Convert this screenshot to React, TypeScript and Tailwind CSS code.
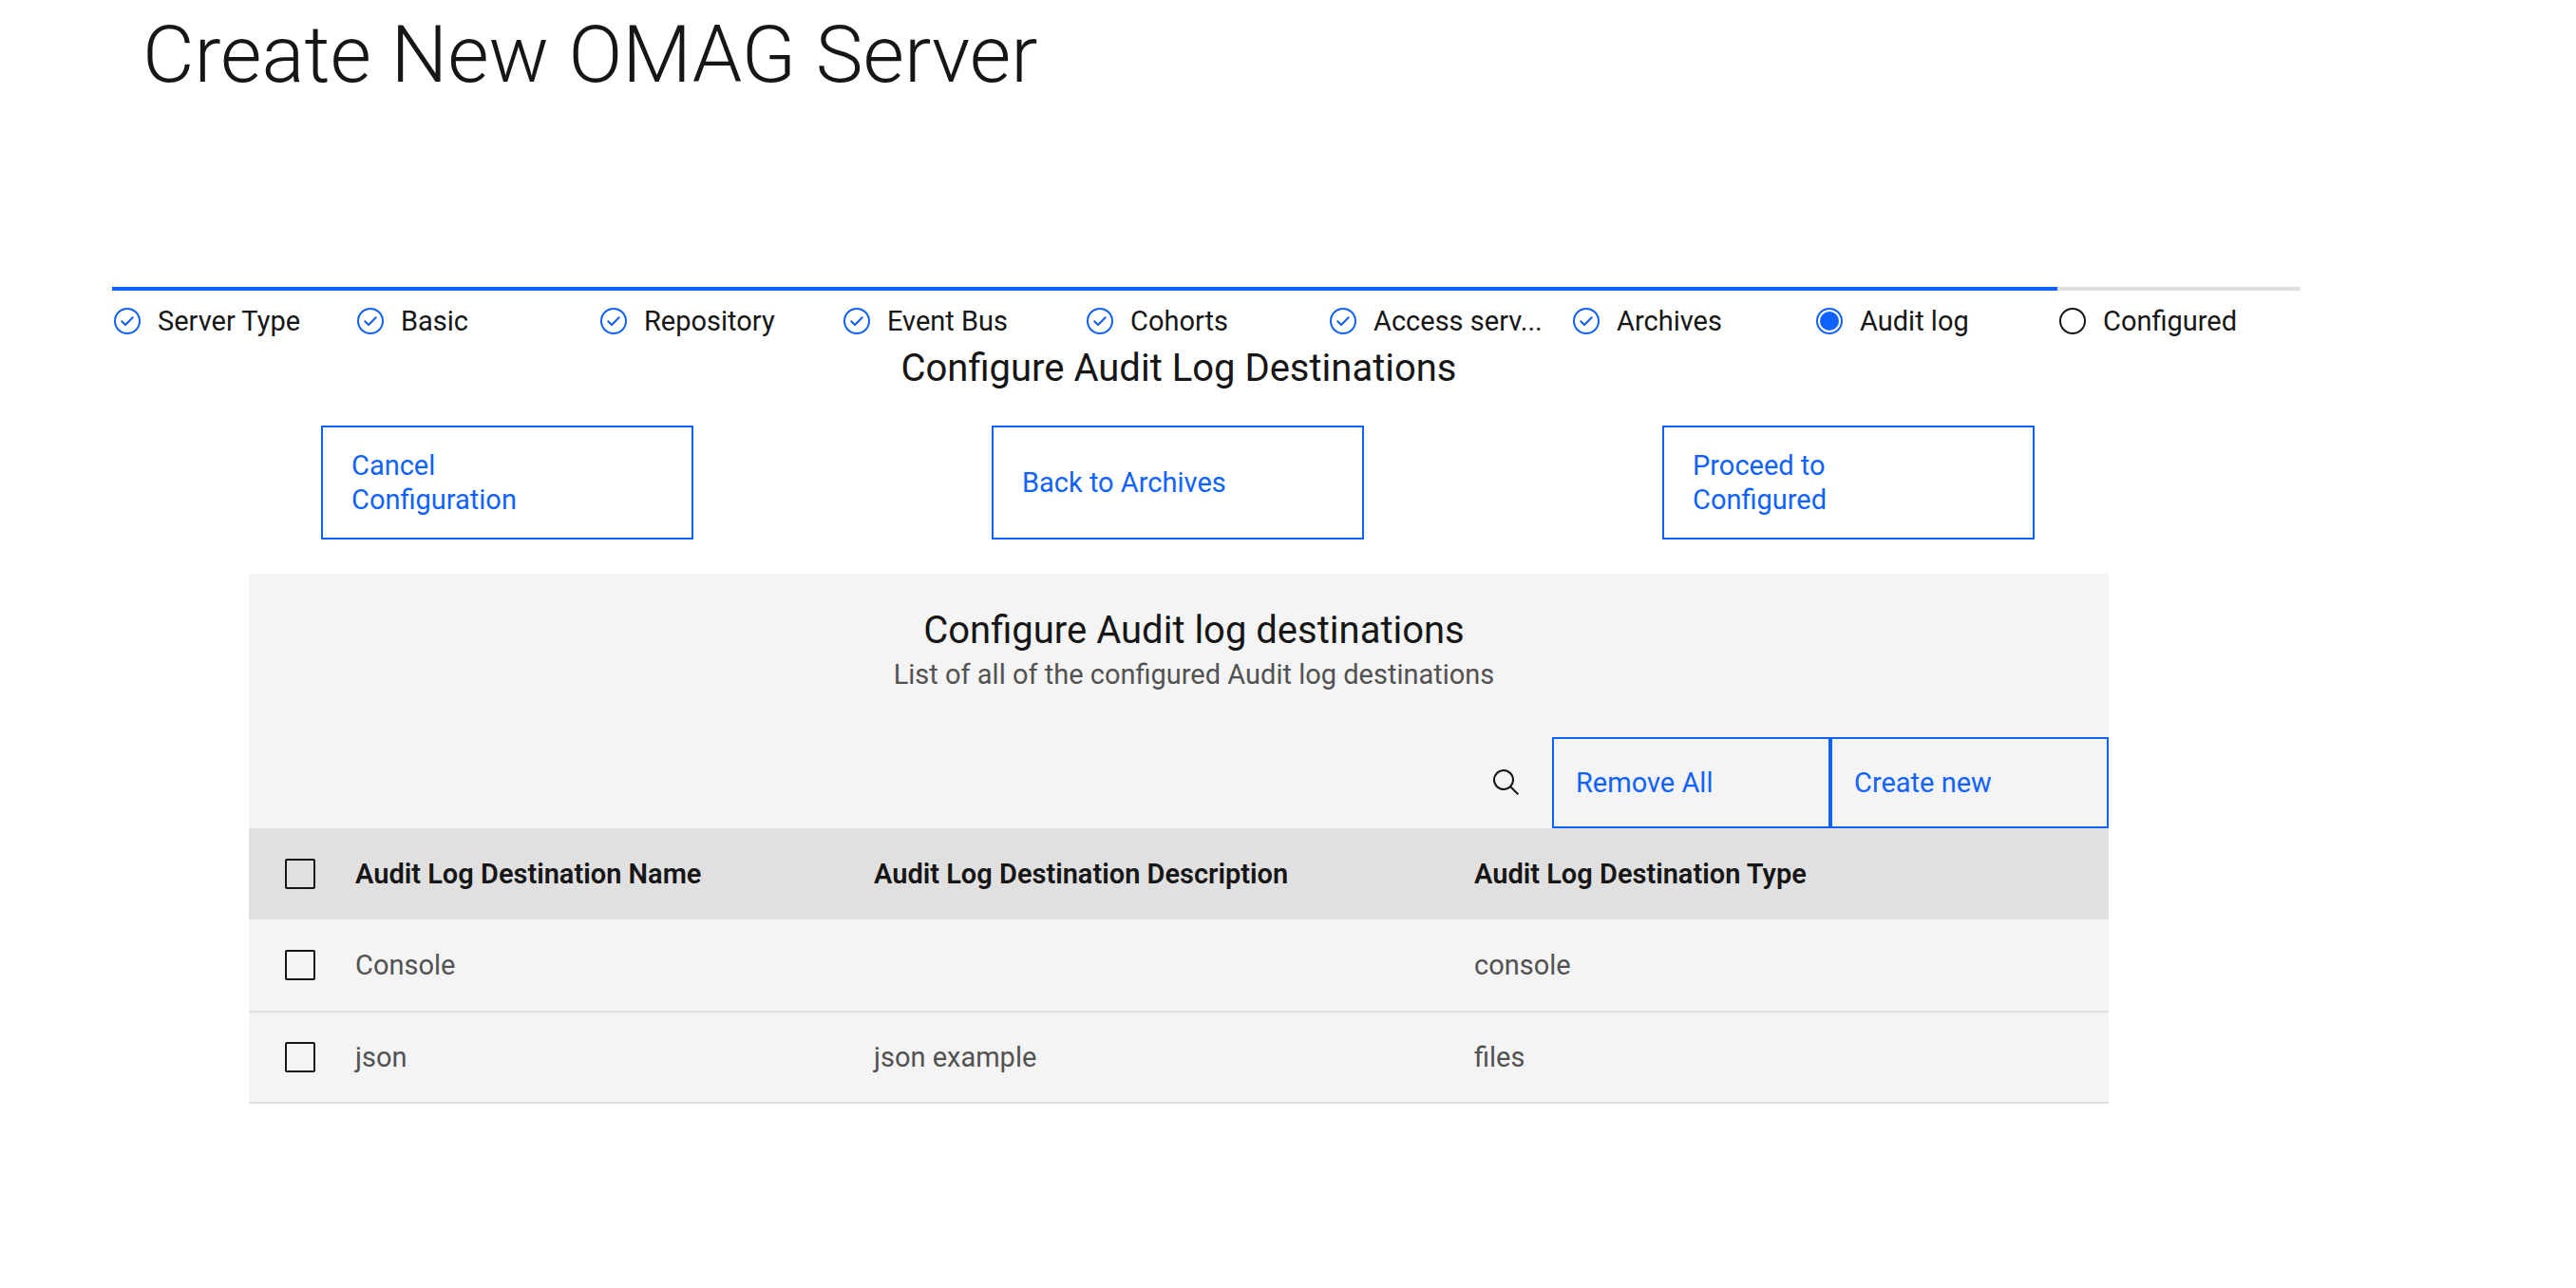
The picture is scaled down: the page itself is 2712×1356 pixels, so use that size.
type StepState = 'complete' | 'current' | 'incomplete';

const steps: { label: string; state: StepState }[] = [
  { label: 'Server Type', state: 'complete' },
  { label: 'Basic', state: 'complete' },
  { label: 'Repository', state: 'complete' },
  { label: 'Event Bus', state: 'complete' },
  { label: 'Cohorts', state: 'complete' },
  { label: 'Access serv...', state: 'complete' },
  { label: 'Archives', state: 'complete' },
  { label: 'Audit log', state: 'current' },
  { label: 'Configured', state: 'incomplete' },
];

const rows = [
  { name: 'Console', description: '', type: 'console' },
  { name: 'json', description: 'json example', type: 'files' },
];

function StepIcon({ state }: { state: StepState }) {
  return (
    <svg
      viewBox="0 0 32 32"
      aria-hidden="true"
      className={`mt-0.5 size-8 shrink-0 ${state === 'incomplete' ? 'text-[#161616]' : 'text-[#0f62fe]'}`}
    >
      <circle cx="16" cy="16" r="13" fill="none" stroke="currentColor" strokeWidth="2" />
      {state === 'complete' && (
        <path fill="currentColor" d="M14 21.414 9 16.413 10.413 15 14 18.586 21.585 11 23 12.415 14 21.414z" />
      )}
      {state === 'current' && <circle cx="16" cy="16" r="10" fill="currentColor" />}
    </svg>
  );
}

function WizardButton({ children }: { children: string }) {
  return (
    <button
      type="button"
      className="flex h-[120px] w-[392px] items-center border-2 border-[#0f62fe] pr-[126px] pl-[30px] text-left text-[#0f62fe]"
    >
      {children}
    </button>
  );
}

function ToolbarButton({ children }: { children: string }) {
  return (
    <button
      type="button"
      className="flex h-24 w-[293px] items-center border-2 border-[#0f62fe] pl-[23px] text-left text-[#0f62fe]"
    >
      {children}
    </button>
  );
}

function Checkbox({ label }: { label: string }) {
  return (
    <input
      type="checkbox"
      aria-label={label}
      className="ml-[38px] block size-8 appearance-none rounded-xs border-2 border-[#161616] checked:bg-[#161616]"
    />
  );
}

export default function App() {
  return (
    <main className="bg-white pt-2 font-['Roboto',sans-serif] text-[29px] leading-9 text-[#161616]">
      <h1 className="pl-[150px] text-[84px] leading-[100px] font-light">Create New OMAG Server</h1>

      <ol className="mt-[194px] mr-[290px] ml-[118px] grid grid-cols-9">
        {steps.map(({ label, state }) => (
          <li
            key={label}
            aria-current={state === 'current' ? 'step' : undefined}
            className={`flex border-t-4 pt-3.5 ${state === 'incomplete' ? 'border-[#e0e0e0]' : 'border-[#0f62fe]'}`}
          >
            <StepIcon state={state} />
            <span className="ml-4 whitespace-nowrap">{label}</span>
          </li>
        ))}
      </ol>

      <div className="mr-[492px] ml-[262px]">
        <h2 className="mt-1 text-center text-[40px] leading-14">Configure Audit Log Destinations</h2>

        <div className="mt-8 flex justify-between pr-[78px] pl-[76px]">
          <WizardButton>Cancel Configuration</WizardButton>
          <WizardButton>Back to Archives</WizardButton>
          <WizardButton>Proceed to Configured</WizardButton>
        </div>

        <section className="mt-9 border-b-2 border-[#e0e0e0] bg-[#f4f4f4]">
          <header className="pt-8 pl-8 text-center">
            <h3 className="text-[40px] leading-14">Configure Audit log destinations</h3>
            <p className="text-[#525252]">List of all of the configured Audit log destinations</p>
          </header>

          <div className="mt-12 flex justify-end">
            <button type="button" aria-label="Search" className="flex size-24 items-center justify-center">
              <svg viewBox="0 0 32 32" aria-hidden="true" className="size-8" fill="#161616">
                <path d="M29,27.5859l-7.5521-7.5521a11.0177,11.0177,0,1,0-1.4141,1.4141L27.5859,29ZM4,13a9,9,0,1,1,9,9A9.01,9.01,0,0,1,4,13Z" />
              </svg>
            </button>
            <ToolbarButton>Remove All</ToolbarButton>
            <ToolbarButton>Create new</ToolbarButton>
          </div>

          <table className="w-full table-fixed border-separate border-spacing-0 text-left">
            <thead className="bg-[#e0e0e0]">
              <tr className="h-24">
                <th className="w-28 p-0">
                  <Checkbox label="Select all rows" />
                </th>
                <th className="w-[546px] p-0 font-semibold">Audit Log Destination Name</th>
                <th className="w-[632px] p-0 font-semibold">Audit Log Destination Description</th>
                <th className="p-0 font-semibold">Audit Log Destination Type</th>
              </tr>
            </thead>
            <tbody className="text-[#525252] [&>tr+tr>td]:border-t-2 [&>tr+tr>td]:border-[#e0e0e0]">
              {rows.map((row) => (
                <tr key={row.name} className="h-24">
                  <td className="p-0">
                    <Checkbox label={`Select ${row.name}`} />
                  </td>
                  <td className="p-0">{row.name}</td>
                  <td className="p-0">{row.description}</td>
                  <td className="p-0">{row.type}</td>
                </tr>
              ))}
            </tbody>
          </table>
        </section>
      </div>
    </main>
  );
}
